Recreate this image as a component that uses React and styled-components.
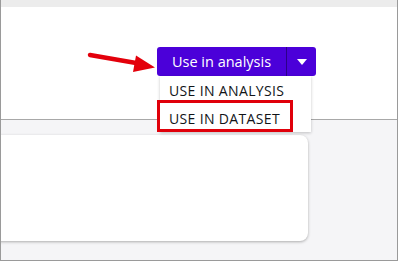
import styled, { createGlobalStyle } from "styled-components";

const Global = createGlobalStyle`
   html, body {
      margin: 0;
      padding: 0;
      background: #ffffff;
   }
   * {
      box-sizing: border-box;
   }
`;

const Frame = styled.div`
   width: 398px;
   height: 261px;
   border: 1px solid #9a9a9a;
   border-top: none;
   display: flex;
   flex-direction: column;
   overflow: hidden;
   font-family: "Open Sans", "Noto Sans", sans-serif;
`;

const TopStrip = styled.div`
   height: 7px;
   background-color: #ececec;
`;

const Header = styled.div`
   position: relative;
   height: 113px;
   background-color: #ffffff;
   border-bottom: 1px solid #a8a8a8;
   display: flex;
   justify-content: flex-end;
   align-items: flex-start;
   padding: 40px 81px 0 0;
   z-index: 2;
`;

const SplitButton = styled.div`
   position: relative;
   display: flex;
   height: 29px;
   border-radius: 3px;
   background-color: #4b00d9;
`;

const MainAction = styled.button`
   width: 130px;
   height: 100%;
   border: none;
   background: transparent;
   color: #ffffff;
   font-family: inherit;
   font-size: 14.5px;
   font-weight: 500;
   padding: 0;
   border-right: 1px solid #2c0089;
   cursor: pointer;
`;

const CaretButton = styled.button`
   width: 29px;
   height: 100%;
   border: none;
   background: transparent;
   display: flex;
   align-items: center;
   justify-content: center;
   padding: 0;
   cursor: pointer;
   &::after {
      content: "";
      border-left: 5.5px solid transparent;
      border-right: 5.5px solid transparent;
      border-top: 6px solid #ffffff;
   }
`;

const Menu = styled.ul`
   position: absolute;
   top: 29px;
   left: 3px;
   width: 151px;
   margin: 0;
   padding: 0;
   list-style: none;
   background-color: #ffffff;
   box-shadow: 0 1px 3px rgba(0, 0, 0, 0.22);
`;

const MenuItem = styled.li`
   position: relative;
   height: 28px;
   padding-left: 9px;
   display: flex;
   align-items: center;
   font-size: 14px;
   letter-spacing: 0.35px;
   color: #111418;
`;

const Highlight = styled.span`
   position: absolute;
   left: -3px;
   top: -4px;
   width: 136px;
   height: 32px;
   border: 3px solid #e0000a;
   pointer-events: none;
`;

const Arrow = styled.svg`
   position: absolute;
   left: 86px;
   top: 43px;
`;

const Content = styled.div`
   flex: 1;
   background-color: #f5f5f7;
   padding-top: 15px;
`;

const Card = styled.div`
   margin-left: -12px;
   width: 319px;
   height: 106px;
   background-color: #ffffff;
   border-radius: 8px;
   box-shadow: 0 1px 3px rgba(0, 0, 0, 0.3);
`;

export default function App() {
   return (
      <>
         <Global />
         <Frame>
            <TopStrip />
            <Header>
               <Arrow width="70" height="24" viewBox="0 0 70 24">
                  <line
                     x1="3"
                     y1="5"
                     x2="52"
                     y2="13.5"
                     stroke="#e3000b"
                     strokeWidth="4.5"
                     strokeLinecap="round"
                  />
                  <polygon points="49,5.5 68,17.5 46,22" fill="#e3000b" />
               </Arrow>
               <SplitButton>
                  <MainAction>Use in analysis</MainAction>
                  <CaretButton aria-label="More actions" />
                  <Menu>
                     <MenuItem>USE IN ANALYSIS</MenuItem>
                     <MenuItem>
                        USE IN DATASET
                        <Highlight />
                     </MenuItem>
                  </Menu>
               </SplitButton>
            </Header>
            <Content>
               <Card />
            </Content>
         </Frame>
      </>
   );
}
